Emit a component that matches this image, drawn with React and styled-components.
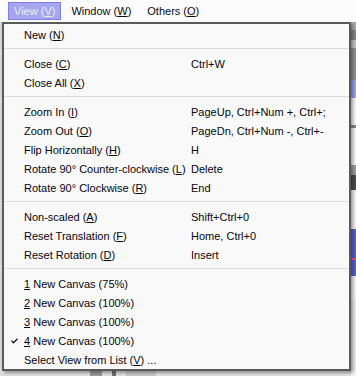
import React from "react";
import styled, { createGlobalStyle } from "styled-components";

const GlobalStyle = createGlobalStyle`
  html, body { margin: 0; padding: 0; background: #d4d4d4; }
  body { font-family: "Liberation Sans", Arial, sans-serif; }
  * { box-sizing: border-box; }
`;

const Screen = styled.div`
  position: relative;
  width: 356px;
  height: 376px;
  overflow: hidden;
  display: flex;
  flex-direction: column;
  font-family: "Liberation Sans", Arial, sans-serif;
  font-size: 11px;
`;

const MenuBar = styled.div`
  height: 22px;
  flex: none;
  display: flex;
  align-items: center;
  gap: 4px;
  padding-left: 8px;
  background: #fbfbfb;
`;

const MenuTitle = styled.div`
  height: 18px;
  display: flex;
  align-items: center;
  padding: 0 5px;
  border: 1px solid ${(p) => (p.$active ? "#7d7de6" : "transparent")};
  background: ${(p) => (p.$active ? "#a6a6f0" : "transparent")};
  color: ${(p) => (p.$active ? "#ececff" : "#0a0a1a")};
  white-space: nowrap;
  u { text-decoration: underline; text-underline-offset: 1px; }
`;

const Workspace = styled.div`
  flex: 1;
  display: flex;
  background: #d8d8d8;
`;

const CanvasArea = styled.div`
  flex: 1;
  display: flex;
  flex-direction: column;
  justify-content: flex-end;
`;

const BottomBar = styled.div`
  height: 6px;
  background: #e0e0e0;
  display: flex;
  gap: 10px;
  padding-left: 90px;
`;

const BottomBlock = styled.div`
  width: ${(p) => p.$w}px;
  background: ${(p) => p.$c};
`;

const SidePanel = styled.div`
  width: 5px;
  display: flex;
  flex-direction: column;
  background: #f2f2f2;
`;

const Segment = styled.div`
  height: ${(p) => p.$h}px;
  flex: none;
  background: ${(p) => p.$c};
`;

const Dropdown = styled.div`
  position: absolute;
  top: 22px;
  left: 2px;
  width: 349px;
  border: 2px solid #5a5a5a;
  background: #f9f9f9;
  padding: 1px 0 0;
  box-shadow: 2px 2px 3px rgba(0, 0, 0, 0.35);
  color: #050510;
`;

const Item = styled.div`
  height: 19px;
  display: grid;
  grid-template-columns: 20px 167px 1fr;
  align-items: center;
  white-space: nowrap;
  u { text-decoration: underline; text-underline-offset: 1px; }
`;

const CheckCell = styled.div`
  display: flex;
  align-items: center;
  padding-left: 7px;
`;

const Label = styled.span``;

const Shortcut = styled.span``;

const Separator = styled.div`
  height: 1px;
  margin: 4px 0 5px;
  background: #dcdcdc;
`;

const Check = () => (
  <svg width="7" height="6" viewBox="0 0 7 6">
    <path d="M0.5 2.8 L2.5 4.8 L6.5 0.8" fill="none" stroke="#1a1a2a" strokeWidth="1.3" />
  </svg>
);

const M = ({ pre = "", k, post = "" }) => (
  <>
    {pre}
    <u>{k}</u>
    {post}
  </>
);

const groups = [
  [{ label: <M pre="New (" k="N" post=")" /> }],
  [
    { label: <M pre="Close (" k="C" post=")" />, sc: "Ctrl+W" },
    { label: <M pre="Close All (" k="X" post=")" /> },
  ],
  [
    { label: <M pre="Zoom In (" k="I" post=")" />, sc: "PageUp, Ctrl+Num +, Ctrl+;" },
    { label: <M pre="Zoom Out (" k="O" post=")" />, sc: "PageDn, Ctrl+Num -, Ctrl+-" },
    { label: <M pre="Flip Horizontally (" k="H" post=")" />, sc: "H" },
    { label: <M pre="Rotate 90° Counter-clockwise (" k="L" post=")" />, sc: "Delete" },
    { label: <M pre="Rotate 90° Clockwise (" k="R" post=")" />, sc: "End" },
  ],
  [
    { label: <M pre="Non-scaled (" k="A" post=")" />, sc: "Shift+Ctrl+0" },
    { label: <M pre="Reset Translation (" k="F" post=")" />, sc: "Home, Ctrl+0" },
    { label: <M pre="Reset Rotation (" k="D" post=")" />, sc: "Insert" },
  ],
  [
    { label: <M k="1" post=" New Canvas (75%)" /> },
    { label: <M k="2" post=" New Canvas (100%)" /> },
    { label: <M k="3" post=" New Canvas (100%)" /> },
    { label: <M k="4" post=" New Canvas (100%)" />, checked: true },
    { label: <M pre="Select View from List (" k="V" post=") ..." /> },
  ],
];

const sideSegments = [
  [8, "#a9a9a9"],
  [10, "#858585"],
  [8, "#c2c2c2"],
  [32, "#8e8e8e"],
  [18, "#9c9ce9"],
  [27, "#f4f4f4"],
  [3, "#8a8a8a"],
  [37, "#f2f2f2"],
  [10, "#9a9a9a"],
  [15, "#4a4a4a"],
  [39, "#f0f0f0"],
  [29, "#5a5ad2"],
  [2, "#e050a0"],
  [16, "#5a5ad2"],
  [24, "#f0f0f0"],
  [20, "#e8e8e8"],
  [50, "#e6e6e6"],
];

export default function App() {
  return (
    <>
      <GlobalStyle />
      <Screen>
        <MenuBar>
          <MenuTitle $active>
            <M pre="View (" k="V" post=")" />
          </MenuTitle>
          <MenuTitle>
            <M pre="Window (" k="W" post=")" />
          </MenuTitle>
          <MenuTitle>
            <M pre="Others (" k="O" post=")" />
          </MenuTitle>
        </MenuBar>
        <Workspace>
          <CanvasArea>
            <BottomBar>
              <BottomBlock $w={12} $c="#9a9a9a" />
              <BottomBlock $w={4} $c="#707070" />
              <BottomBlock $w={30} $c="#c8c8c8" />
            </BottomBar>
          </CanvasArea>
          <SidePanel>
            {sideSegments.map(([h, c], i) => (
              <Segment key={i} $h={h} $c={c} />
            ))}
          </SidePanel>
        </Workspace>
        <Dropdown>
          {groups.map((g, gi) => (
            <React.Fragment key={gi}>
              {gi > 0 && <Separator />}
              {g.map((it, ii) => (
                <Item key={ii}>
                  <CheckCell>{it.checked ? <Check /> : null}</CheckCell>
                  <Label>{it.label}</Label>
                  <Shortcut>{it.sc || ""}</Shortcut>
                </Item>
              ))}
            </React.Fragment>
          ))}
        </Dropdown>
      </Screen>
    </>
  );
}
